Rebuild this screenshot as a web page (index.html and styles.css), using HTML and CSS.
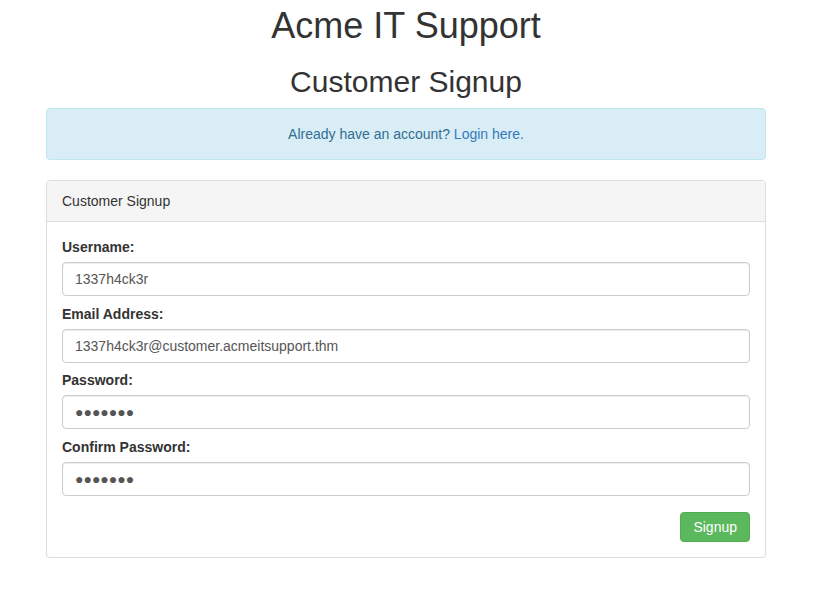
FILE: index.html
```html
<!DOCTYPE html>
<html>
<head>
<meta charset="utf-8">
<title>Acme IT Support - Customer Signup</title>
<link rel="stylesheet" href="styles.css">
</head>
<body>
<div class="page">
  <h1 class="title">Acme IT Support</h1>
  <h2 class="subtitle">Customer Signup</h2>
  <div class="alert">Already have an account? <a href="#" class="alert-link">Login here.</a></div>
  <div class="panel">
    <div class="panel-heading">Customer Signup</div>
    <form class="panel-body">
      <div class="form-group">
        <label class="label">Username:</label>
        <input class="input" type="text" value="1337h4ck3r">
      </div>
      <div class="form-group">
        <label class="label">Email Address:</label>
        <input class="input" type="text" value="1337h4ck3r@customer.acmeitsupport.thm">
      </div>
      <div class="form-group">
        <label class="label">Password:</label>
        <input class="input masked" type="text" value="●●●●●●●" aria-label="Password">
      </div>
      <div class="form-group">
        <label class="label">Confirm Password:</label>
        <input class="input masked" type="text" value="●●●●●●●" aria-label="Confirm Password">
      </div>
      <div class="actions">
        <button type="button" class="btn-success">Signup</button>
      </div>
    </form>
  </div>
</div>
</body>
</html>
```
FILE: styles.css
```css
* { box-sizing: border-box; }
html, body { margin: 0; padding: 0; }
body {
  font-family: "Liberation Sans", Arial, sans-serif;
  font-size: 14px;
  line-height: 20px;
  color: #333;
  background: #fff;
  padding-right: 16px;
}
.page {
  width: 720px;
  margin: 0 auto;
}
.title {
  font-size: 36px;
  line-height: 1.1;
  font-weight: 500;
  text-align: center;
  margin: 6px 0 19.2px;
}
.subtitle {
  font-size: 30px;
  line-height: 1.1;
  font-weight: 500;
  text-align: center;
  margin: 0 0 10.2px;
}
.alert {
  padding: 15px;
  border: 1px solid #bce8f1;
  border-radius: 4px;
  background: #d9edf7;
  color: #31708f;
  text-align: center;
  margin-bottom: 20px;
}
.alert-link {
  color: #337ab7;
  text-decoration: none;
}
.panel {
  border: 1px solid #ddd;
  border-radius: 4px;
  box-shadow: 0 1px 1px rgba(0,0,0,.05);
}
.panel-heading {
  padding: 10px 15px;
  background: #f5f5f5;
  border-bottom: 1px solid #ddd;
  border-radius: 3px 3px 0 0;
}
.panel-body {
  padding: 15px;
  margin: 0;
}
.form-group {
  margin-bottom: 7.67px;
}
.label {
  display: block;
  font-weight: bold;
  margin-bottom: 5px;
}
.input {
  display: block;
  width: 100%;
  height: 34px;
  padding: 6px 12px;
  font-family: "Liberation Sans", Arial, sans-serif;
  font-size: 14px;
  line-height: 20px;
  color: #555;
  background: #fff;
  border: 1px solid #ccc;
  border-radius: 4px;
  box-shadow: inset 0 1px 1px rgba(0,0,0,.075);
  margin: 0;
}
.actions {
  display: flex;
  justify-content: flex-end;
  padding-top: 8.5px;
}
.btn-success {
  height: 30px;
  padding: 4px 12px;
  font-family: "Liberation Sans", Arial, sans-serif;
  font-size: 14px;
  line-height: 20px;
  color: #fff;
  background: #5cb85c;
  border: 1px solid #4cae4c;
  border-radius: 4px;
  cursor: pointer;
}
```
